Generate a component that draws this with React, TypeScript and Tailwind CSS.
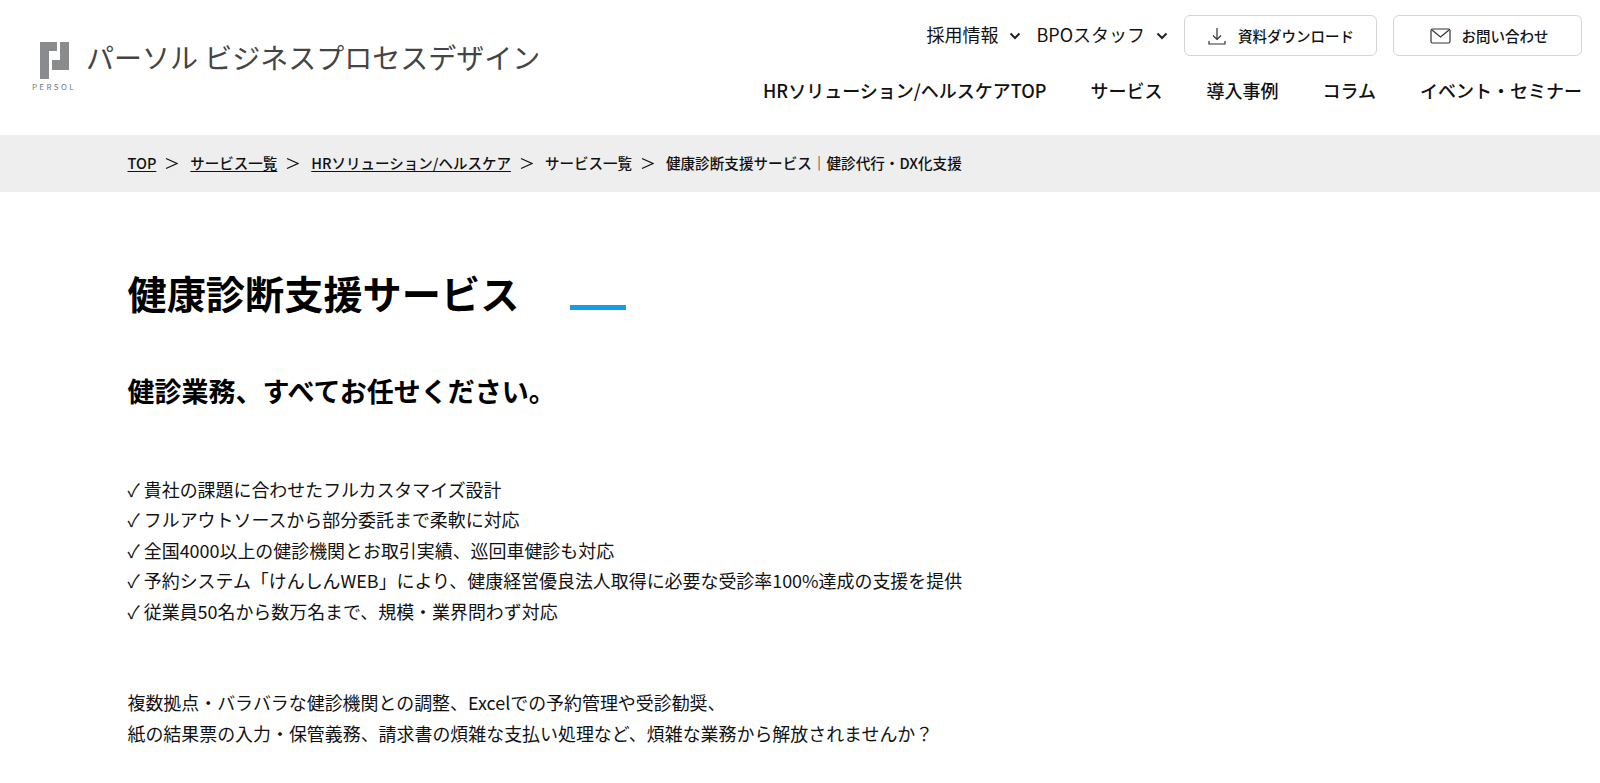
const font = { fontFamily: '"Noto Sans CJK JP", "Noto Sans", sans-serif' };

const Chevron = () => (
  <svg width="12" height="8" viewBox="0 0 12 8" fill="none" stroke="#222" strokeWidth="2">
    <path d="M1.500 1.500 6 6l4.500-4.500" />
  </svg>
);

const Sep = () => (
  <svg width="13" height="13" viewBox="0 0 13 13" fill="none" stroke="#111" strokeWidth="1.2" className="ml-[9px] mr-[12px]">
    <path d="M1 1.500 12 6.500 1 11.500" />
  </svg>
);

const Logo = () => (
  <div className="flex flex-col items-center w-[46px]">
    <svg width="29" height="37" viewBox="0 0 29 37" fill="#8a8b8d">
      <path d="M0 0h17v9H9v28H0z" />
      <path d="M20 0h9v28H12V18h8z" />
    </svg>
    <span className="text-[8px] leading-none tracking-[0.3em] text-[#777] mt-[4px]">PERSOL</span>
  </div>
);

const checks = [
  "✓ 貴社の課題に合わせたフルカスタマイズ設計",
  "✓ フルアウトソースから部分委託まで柔軟に対応",
  "✓ 全国4000以上の健診機関とお取引実績、巡回車健診も対応",
  "✓ 予約システム「けんしんWEB」により、健康経営優良法人取得に必要な受診率100%達成の支援を提供",
  "✓ 従業員50名から数万名まで、規模・業界問わず対応",
];

export default function App() {
  return (
    <div className="bg-white text-[#111] min-h-[783px] overflow-hidden" style={font}>
      <header className="h-[135px] flex justify-between pl-[31px] pr-[18px]">
        <div className="flex items-start pt-[42px] gap-[9px]">
          <Logo />
          <span className="text-[28px] leading-[32px] font-normal text-[#444] -mt-[1px]">
            パーソル ビジネスプロセスデザイン
          </span>
        </div>
        <div className="flex flex-col items-end">
          <div className="flex items-center pt-[15px]">
            <span className="text-[18px] -mt-[2px]">採用情報</span>
            <span className="ml-[11px]"><Chevron /></span>
            <span className="text-[18px] ml-[15px] -mt-[2px]">BPOスタッフ</span>
            <span className="ml-[11px]"><Chevron /></span>
            <button className="ml-[16px] w-[193px] h-[41px] border border-[#d5d5d5] rounded-[6px] flex items-center justify-center gap-[11px] text-[14.500px] font-medium">
              <svg width="20" height="20" viewBox="0 0 20 20" fill="none" stroke="#333" strokeWidth="1.2">
                <path d="M10 2v11M6 9.500l4 4 4-4M2 15v3h16v-3" />
              </svg>
              資料ダウンロード
            </button>
            <button className="ml-[16px] w-[189px] h-[41px] border border-[#d5d5d5] rounded-[6px] flex items-center justify-center gap-[11px] pl-[3px] text-[14.500px] font-medium">
              <svg width="21" height="16" viewBox="0 0 21 16" fill="none" stroke="#333" strokeWidth="1.2">
                <rect x="1" y="1" width="19" height="14" rx="1.500" />
                <path d="M2 2l8.500 7L19 2" />
              </svg>
              お問い合わせ
            </button>
          </div>
          <nav className="flex gap-[44px] mt-[20px] text-[18px] font-medium leading-[28px]">
            <span>HRソリューション/ヘルスケアTOP</span>
            <span>サービス</span>
            <span>導入事例</span>
            <span>コラム</span>
            <span>イベント・セミナー</span>
          </nav>
        </div>
      </header>
      <div className="h-[57px] bg-[#eeeeee] flex items-center pl-[127.500px] pb-[1px] text-[14.500px] font-medium">
        <span className="underline underline-offset-2">TOP</span>
        <Sep />
        <span className="underline underline-offset-2">サービス一覧</span>
        <Sep />
        <span className="underline underline-offset-2">HRソリューション/ヘルスケア</span>
        <Sep />
        <span>サービス一覧</span>
        <Sep />
        <span className="text-[14.600px]">健康診断支援サービス｜健診代行・DX化支援</span>
      </div>
      <main className="pl-[127.500px]">
        <div className="flex items-end pt-[71px]">
          <h1 className="text-[39.200px] leading-[58px] font-bold text-black">健康診断支援サービス</h1>
          <div className="w-[56px] h-[5px] bg-[#0ea0e6] ml-[51px] mb-[11px]" />
        </div>
        <h2 className="text-[27px] leading-[40px] font-bold mt-[50px] text-black">健診業務、すべてお任せください。</h2>
        <div className="mt-[63px] text-[17.960px] leading-[30.460px]">
          {checks.map((c) => (
            <p key={c}>{c}</p>
          ))}
        </div>
        <div className="mt-[61px] text-[17.960px] leading-[30.460px]">
          <p>複数拠点・バラバラな健診機関との調整、Excelでの予約管理や受診勧奨、</p>
          <p>紙の結果票の入力・保管義務、請求書の煩雑な支払い処理など、煩雑な業務から解放されませんか？</p>
        </div>
      </main>
    </div>
  );
}
